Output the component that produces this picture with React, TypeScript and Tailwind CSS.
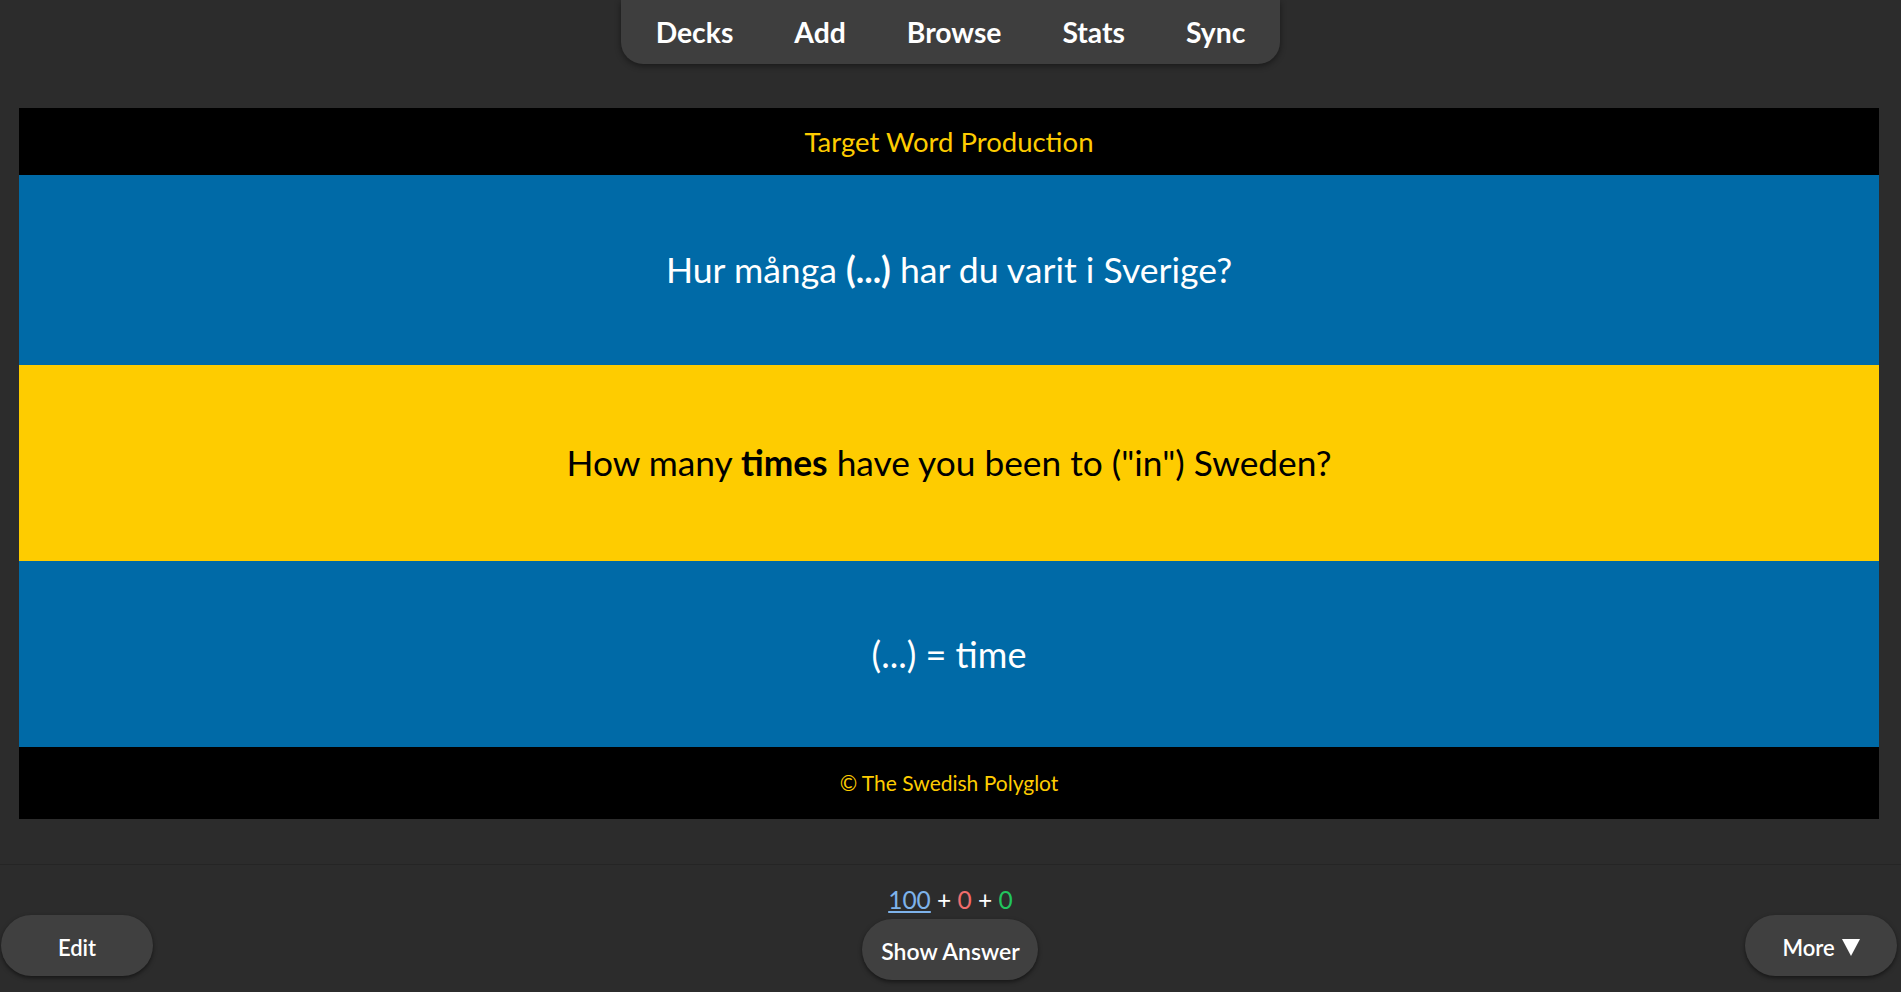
import { useState } from 'react';

const navItems = ['Decks', 'Add', 'Browse', 'Stats', 'Sync'];

const uiFont = { fontFamily: 'Lato, "Open Sans", sans-serif' };
const cardFont = { fontFamily: 'Lato, "Noto Sans", sans-serif' };

const App = () => {
    const [revealed, setRevealed] = useState(false);

    return (
        <div className="min-h-screen bg-[#2c2c2c] flex flex-col" style={uiFont}>
            {/* Top navigation */}
            <div className="flex justify-center">
                <nav className="flex h-[64px] items-center px-[4px] bg-[#3e3e3e] rounded-b-[22px] shadow-[0_2px_6px_rgba(0,0,0,0.45)]">
                    {navItems.map((item) => (
                        <a key={item} className="px-[30.5px] text-[28.3px] font-bold text-white leading-none cursor-pointer">
                            {item}
                        </a>
                    ))}
                </nav>
            </div>

            {/* Card */}
            <div className="mt-[44px] ml-[19px] mr-[22px]" style={cardFont}>
                <div className="h-[67px] bg-black flex items-center justify-center text-[#fecc00] text-[27.5px]">
                    Target Word Production
                </div>
                <div className="h-[190px] bg-[#006aa7] flex items-center justify-center text-white text-[35.6px]">
                    <span>
                        Hur många <b>(...)</b> har du varit i Sverige?
                    </span>
                </div>
                <div className="h-[196px] bg-[#fecc00] flex items-center justify-center text-black text-[35.3px]">
                    <span>
                        How many <b>times</b> have you been to ("in") Sweden?
                    </span>
                </div>
                <div className="h-[186px] bg-[#006aa7] flex items-center justify-center text-white text-[36px]">
                    {revealed ? 'time' : '(...) = time'}
                </div>
                <div className="h-[72px] bg-black flex items-center justify-center text-[#fecc00] text-[21px]">
                    © The Swedish Polyglot
                </div>
            </div>

            {/* Bottom bar */}
            <div className="mt-[45px] h-[127px] border-t border-[#252525] grid grid-cols-3">
                <div className="flex items-start pt-[50px] pl-[1px]">
                    <button className="w-[152px] h-[61px] pt-[3px] rounded-full bg-[#404040] text-white text-[22px] font-semibold shadow-[0_2px_4px_rgba(0,0,0,0.5)]">
                        Edit
                    </button>
                </div>
                <div className="flex flex-col items-center pt-[20px]">
                    <div className="text-[24.5px] leading-[30px] text-white">
                        <span className="text-[#7eb3eb] underline">100</span>
                        <span> + </span>
                        <span className="text-[#f26d6d]">0</span>
                        <span> + </span>
                        <span className="text-[#22c55e]">0</span>
                    </div>
                    <button
                        onClick={() => setRevealed(!revealed)}
                        className="mt-[4px] w-[176px] h-[61px] pt-[3px] rounded-full bg-[#404040] text-white text-[23px] font-semibold shadow-[0_2px_4px_rgba(0,0,0,0.5)]"
                    >
                        Show Answer
                    </button>
                </div>
                <div className="flex items-start justify-end pt-[50px] pr-[4px]">
                    <button className="w-[152px] h-[61px] pt-[3px] rounded-full bg-[#404040] text-white text-[22px] font-semibold shadow-[0_2px_4px_rgba(0,0,0,0.5)] flex items-center justify-center gap-[7px]">
                        <span>More</span>
                        <svg width="18" height="17" viewBox="0 0 18 17" className="mt-[1px]">
                            <polygon points="0,0 18,0 9,17" fill="white" />
                        </svg>
                    </button>
                </div>
            </div>
        </div>
    );
};

export default App;
